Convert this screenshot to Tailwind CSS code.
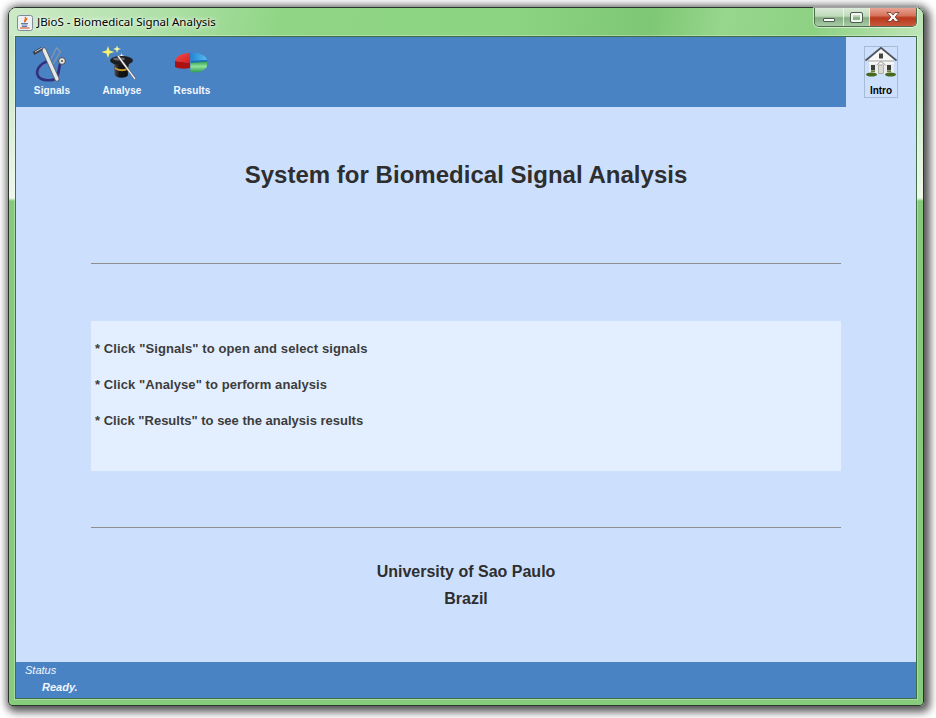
<!DOCTYPE html>
<html>
<head>
<meta charset="utf-8">
<title>JBioS</title>
<script src="https://cdn.jsdelivr.net/npm/@tailwindcss/browser@4"></script>
</head>
<body class="w-[936px] h-[718px] overflow-hidden bg-white pl-[8px] pt-[7px] font-['Liberation_Sans',Arial,sans-serif]">
<div class="w-[916px] h-[699px] flex flex-col rounded-t-[8px] rounded-b-[4px] border border-[#2b352b] px-[6px] pb-[6px] shadow-[3px_3px_9px_3px_rgba(0,0,0,0.6),0_0_8px_2px_rgba(0,0,0,0.25)] bg-[linear-gradient(180deg,#bfe4b8_0px,#d5eed1_100px,#eef8ec_190px,#84ca7a_193px,#86cc7c_100%)]">
  <!-- title bar -->
  <div class="-mx-[6px] px-[6px] h-[28px] shrink-0 flex justify-between items-start rounded-t-[7px] bg-[linear-gradient(100deg,#cdeac7_0%,#b4e2ad_14%,#8fd585_30%,#8cd382_55%,#7ec774_70%,#96d68d_78%,#8dd183_88%,#bfe5b8_100%)]">
    <div class="flex items-center h-[28px] pl-[2px]">
      <svg width="16" height="16" viewBox="0 0 16 16" class="shrink-0 mt-[1px]">
        <rect x="0.5" y="0.5" width="15" height="15" rx="2" fill="#eef0f4" stroke="#7d8a9c"/>
        <path d="M8 2 C10 4 6 5 8 7.5 C7.5 5.5 11 5 9.5 2.8" fill="none" stroke="#e2681c" stroke-width="1.2"/>
        <path d="M4 8.5 H11 M4.5 10 H10.5 M5 11.5 H10" stroke="#4a6fa8" stroke-width="0.9"/>
        <path d="M3 13 H12.5" stroke="#d0441c" stroke-width="1"/>
      </svg>
      <span class="ml-[4px] text-[11.5px] leading-[16px] text-black font-['Noto_Sans',sans-serif] whitespace-nowrap [text-shadow:0_0_6px_#ffffff,0_0_3px_#ffffff]">JBioS - Biomedical Signal Analysis</span>
    </div>
    <div class="flex h-[19px] w-[103px] rounded-b-[5px] border border-t-0 border-[#4f6b50] overflow-hidden shadow-[0_0_0_1px_rgba(255,255,255,0.55)]">
      <div class="w-[29px] border-r border-[#f0f6ef]/80 flex items-center justify-center bg-[linear-gradient(180deg,#dcebd9_0%,#bfdabb_45%,#86ad83_55%,#a8cba5_100%)]">
        <div class="w-[12px] h-[4px] mt-[5px] bg-white border border-[#4b5d4b] rounded-[1px]"></div>
      </div>
      <div class="w-[26px] border-r border-[#f0f6ef]/80 flex items-center justify-center bg-[linear-gradient(180deg,#dcebd9_0%,#bfdabb_45%,#86ad83_55%,#a8cba5_100%)]">
        <div class="w-[11px] h-[9px] border-2 border-[#f4f7f4] outline outline-1 outline-[#4b5d4b] rounded-[1px]"></div>
      </div>
      <div class="flex-1 flex items-center justify-center bg-[linear-gradient(180deg,#e8a493_0%,#d6735c_42%,#b8381c_55%,#c85a3c_100%)]">
        <svg width="16" height="12" viewBox="0 0 16 12"><path d="M2 1.5 H6 L8 4 L10 1.5 H14 L10.2 6 L14 10.5 H10 L8 8 L6 10.5 H2 L5.8 6 Z" fill="#f6f3f0" stroke="#6d3022" stroke-width="0.8"/></svg>
      </div>
    </div>
  </div>

  <!-- client area -->
  <div class="flex-1 flex flex-col border border-[#3f7044] bg-[#cce0fe] min-h-0 shadow-[0_0_0_1px_rgba(255,255,255,0.3)]">
    <!-- toolbar -->
    <div class="h-[70px] shrink-0 flex">
      <div class="w-[830px] bg-[#4a83c4] flex pl-[1px]">
        <div class="w-[70px] flex flex-col items-center pt-[9px]">
          <svg width="40" height="36" viewBox="0 0 40 36">
            <path d="M18 15 L24.500 2 L28.500 5.500 L21 18" fill="none" stroke="#8d97a6" stroke-width="1.100"/>
            <path d="M16 15 C8 18 3 24 6 30 C9 35 22 36 25 31 C27 27 27 22 28 18" fill="none" stroke="#30307c" stroke-width="2.600"/>
            <path d="M13 18 C8 21 6 25 8 29" fill="none" stroke="#6a6abc" stroke-width="1"/>
            <path d="M12 4 L25 33" stroke="#5f6670" stroke-width="5.200" stroke-linecap="round"/>
            <path d="M12 4 L25 33" stroke="#e6e9ec" stroke-width="3.200" stroke-linecap="round"/>
            <path d="M1.500 7.500 L10 2.500" stroke="#3e4249" stroke-width="3.600"/>
            <path d="M3 6 L10 2" stroke="#c9ced4" stroke-width="1"/>
            <circle cx="30" cy="15" r="3.400" fill="#e8e8e0" stroke="#44444c" stroke-width="1"/>
            <circle cx="30" cy="15" r="1.100" fill="#55555c"/>
          </svg>
          <span class="mt-[3px] text-[10px] leading-[12px] font-bold tracking-[0.1px] text-[#f4f8fd]">Signals</span>
        </div>
        <div class="w-[70px] flex flex-col items-center pt-[9px]">
          <svg width="40" height="36" viewBox="0 0 40 36">
            <defs>
              <linearGradient id="crn" x1="0" y1="0" x2="1" y2="0"><stop offset="0" stop-color="#5a5a60"/><stop offset="0.35" stop-color="#151516"/><stop offset="0.8" stop-color="#0f0f10"/><stop offset="1" stop-color="#4a4a4e"/></linearGradient>
            </defs>
            <path d="M6 0 L7.500 4.500 L12.500 6 L7.500 7.500 L6 12 L4.500 7.500 L-0.500 6 L4.500 4.500 Z" fill="#f7f270"/>
            <path d="M15 -1 L15.900 2.100 L19 3 L15.900 3.900 L15 7 L14.100 3.900 L11 3 L14.100 2.100 Z" fill="#f8f6a0"/>
            <path d="M19.500 7 L20.200 9.300 L22.500 10 L20.200 10.700 L19.500 13 L18.800 10.700 L16.500 10 L18.800 9.300 Z" fill="#fbfae0"/>
            <path d="M11.500 15 C13 22 12 27 13 29.500 C16 32.500 23 32.500 26 29.500 C26 26 26 21 28 15 Z" fill="url(#crn)"/>
            <ellipse cx="19.500" cy="14.500" rx="11.500" ry="4.500" fill="#1d1d20"/>
            <ellipse cx="17" cy="13" rx="6" ry="1.600" fill="#66676e"/>
            <path d="M12.800 21 C17 24 23 24 26.500 21 L26.300 23 C23 26 17 26 13 23 Z" fill="#c9982a"/>
            <path d="M16 10 L33 33" stroke="#55585c" stroke-width="2.400"/>
            <path d="M16 10 L33 33" stroke="#f4f4f0" stroke-width="1.300"/>
          </svg>
          <span class="mt-[3px] text-[10px] leading-[12px] font-bold tracking-[0.1px] text-[#f4f8fd]">Analyse</span>
        </div>
        <div class="w-[70px] flex flex-col items-center pt-[9px]">
          <svg width="40" height="36" viewBox="0 0 40 36">
            <defs>
              <linearGradient id="rd" x1="0" y1="0" x2="1" y2="1"><stop offset="0" stop-color="#f05050"/><stop offset="1" stop-color="#d81c1c"/></linearGradient>
              <linearGradient id="bl" x1="0" y1="0" x2="1" y2="0"><stop offset="0" stop-color="#1f7fd0"/><stop offset="1" stop-color="#55bdf0"/></linearGradient>
              <linearGradient id="gn" x1="0" y1="0" x2="0" y2="1"><stop offset="0" stop-color="#2fa050"/><stop offset="0.45" stop-color="#8fe29a"/><stop offset="1" stop-color="#2c9a4e"/></linearGradient>
            </defs>
            <path d="M18 17 L18 22 C13 23 7 23 3 21 L3 15 Z" fill="#ad1010"/>
            <path d="M18 7 C10 7 4 10 3 15 L18 17 Z" fill="url(#rd)"/>
            <path d="M17 7 C26 6 34 9 35 14 L19 15 Z" fill="url(#bl)"/>
            <path d="M19 15 L35 14 L35 17 L19 18 Z" fill="#1d6fb8"/>
            <path d="M18.500 17 L35 15.500 C35.500 19 35 22 33 23 C29 26.500 22 27 18.500 26 Z" fill="url(#gn)"/>
          </svg>
          <span class="mt-[3px] text-[10px] leading-[12px] font-bold tracking-[0.1px] text-[#f4f8fd]">Results</span>
        </div>
      </div>
      <div class="flex-1 flex justify-center pt-[9px]">
        <div class="w-[34px] h-[52px] border border-[#a7bbd4] flex flex-col items-center">
          <svg width="32" height="37" viewBox="0 0 32 37" class="shrink-0">
            <path d="M16 1 L29 13 V27 H4 V13 Z" fill="#f8f8f6"/>
            <rect x="4" y="17" width="25" height="9.500" fill="#ececea"/>
            <path d="M0.500 13.500 L16 0.800 L31.500 13.500" fill="none" stroke="#50545a" stroke-width="1.800"/>
            <path d="M3 14 H29" stroke="#a0a0a0" stroke-width="1"/>
            <rect x="14" y="6.500" width="4" height="5" fill="#44473f"/>
            <rect x="6" y="18" width="4" height="5.500" fill="#3c3f3a"/>
            <rect x="22" y="18" width="4" height="5.500" fill="#3c3f3a"/>
            <path d="M11.500 18 L16 14.500 L20.500 18" fill="none" stroke="#9a9a9a" stroke-width="1"/>
            <rect x="13.500" y="18" width="5" height="8.500" fill="#d8d9d6" stroke="#9a9a96" stroke-width="0.700"/>
            <ellipse cx="6.500" cy="27.500" rx="5.500" ry="2" fill="#47691f"/>
            <ellipse cx="25.500" cy="27.500" rx="5.500" ry="2" fill="#47691f"/>
            <rect x="6" y="24" width="4" height="1.200" fill="#5c8a2a"/>
            <rect x="22" y="24" width="4" height="1.200" fill="#5c8a2a"/>
          </svg>
          <span class="mt-[1px] text-[10px] leading-[12px] font-bold text-black">Intro</span>
        </div>
      </div>
    </div>

    <!-- main -->
    <div class="flex-1 min-h-0 px-[75px]">
      <div class="h-[156px] pb-[20px] flex items-center justify-center">
        <h1 class="text-[24px] leading-[30px] font-bold tracking-[0.02px] text-[#2e2e2e] text-center">System for Biomedical Signal Analysis</h1>
      </div>
      <div class="h-px bg-[#8f8f8f]"></div>
      <div class="mt-[57px] h-[150px] bg-[#e3effe] pt-[10px] pl-[4px] text-[13px] leading-[36px] font-bold text-[#3c3c3c]">
        <p class="tracking-[0.1px]">* Click "Signals" to open and select signals</p>
        <p class="tracking-[0.08px]">* Click "Analyse" to perform analysis</p>
        <p>* Click "Results" to see the analysis results</p>
      </div>
      <div class="mt-[56px] h-px bg-[#8f8f8f]"></div>
      <div class="mt-[30px] text-[16px] leading-[27px] font-bold text-[#2e2e2e] text-center">
        <p>University of Sao Paulo</p>
        <p>Brazil</p>
      </div>
    </div>

    <!-- status -->
    <div class="h-[36px] shrink-0 bg-[#4a83c4] text-[#f0f5fc] italic pl-[9px]">
      <p class="text-[11px] leading-[15px] pt-[1px]">Status</p>
      <p class="pl-[17px] mt-[2px] text-[11px] leading-[14px] font-bold">Ready.</p>
    </div>
  </div>
</div>
</body>
</html>
